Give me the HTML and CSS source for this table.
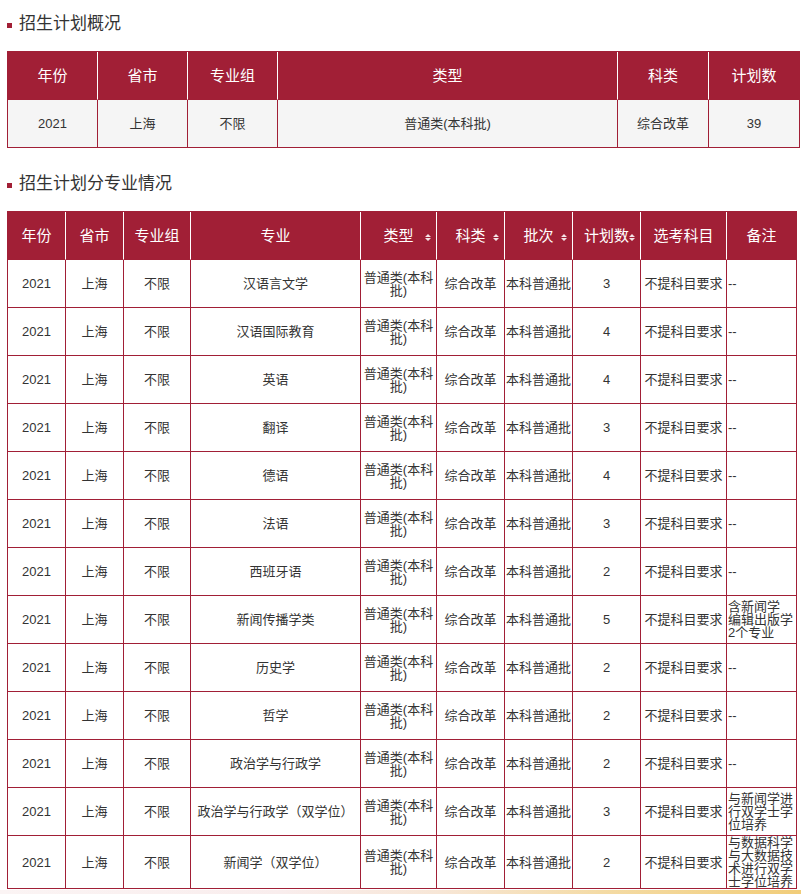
FILE: index.html
```html
<!DOCTYPE html>
<html lang="zh-CN">
<head>
<meta charset="utf-8">
<title>招生计划</title>
<link rel="stylesheet" href="styles.css">
</head>
<body>
<div class="page">
  <h2 class="sec-title"><span class="dot"></span>招生计划概况</h2>
  <table class="plan summary">
    <colgroup>
      <col class="s1"><col class="s2"><col class="s3"><col class="s4"><col class="s5"><col class="s6">
    </colgroup>
    <thead>
      <tr><th>年份</th><th>省市</th><th>专业组</th><th>类型</th><th>科类</th><th>计划数</th></tr>
    </thead>
    <tbody>
      <tr><td>2021</td><td>上海</td><td>不限</td><td>普通类(本科批)</td><td>综合改革</td><td>39</td></tr>
    </tbody>
  </table>

  <h2 class="sec-title second"><span class="dot"></span>招生计划分专业情况</h2>
  <table class="plan detail">
    <colgroup>
      <col class="d1"><col class="d2"><col class="d3"><col class="d4"><col class="d5"><col class="d6"><col class="d7"><col class="d8"><col class="d9"><col class="d10">
    </colgroup>
    <thead>
      <tr>
        <th>年份</th><th>省市</th><th>专业组</th><th>专业</th>
        <th class="sortable">类型<span class="sort"><svg viewBox="0 0 6 7" width="6" height="7"><path d="M0 3 L3 0 L6 3 Z M0 4 L6 4 L3 7 Z" fill="#f4e3e6"/></svg></span></th>
        <th class="sortable">科类<span class="sort"><svg viewBox="0 0 6 7" width="6" height="7"><path d="M0 3 L3 0 L6 3 Z M0 4 L6 4 L3 7 Z" fill="#f4e3e6"/></svg></span></th>
        <th class="sortable">批次<span class="sort"><svg viewBox="0 0 6 7" width="6" height="7"><path d="M0 3 L3 0 L6 3 Z M0 4 L6 4 L3 7 Z" fill="#f4e3e6"/></svg></span></th>
        <th class="sortable">计划数<span class="sort"><svg viewBox="0 0 6 7" width="6" height="7"><path d="M0 3 L3 0 L6 3 Z M0 4 L6 4 L3 7 Z" fill="#f4e3e6"/></svg></span></th>
        <th>选考科目</th><th>备注</th>
      </tr>
    </thead>
    <tbody>
      <tr><td>2021</td><td>上海</td><td>不限</td><td>汉语言文学</td><td>普通类(本科批)</td><td>综合改革</td><td>本科普通批</td><td>3</td><td>不提科目要求</td><td class="note">--</td></tr>
      <tr><td>2021</td><td>上海</td><td>不限</td><td>汉语国际教育</td><td>普通类(本科批)</td><td>综合改革</td><td>本科普通批</td><td>4</td><td>不提科目要求</td><td class="note">--</td></tr>
      <tr><td>2021</td><td>上海</td><td>不限</td><td>英语</td><td>普通类(本科批)</td><td>综合改革</td><td>本科普通批</td><td>4</td><td>不提科目要求</td><td class="note">--</td></tr>
      <tr><td>2021</td><td>上海</td><td>不限</td><td>翻译</td><td>普通类(本科批)</td><td>综合改革</td><td>本科普通批</td><td>3</td><td>不提科目要求</td><td class="note">--</td></tr>
      <tr><td>2021</td><td>上海</td><td>不限</td><td>德语</td><td>普通类(本科批)</td><td>综合改革</td><td>本科普通批</td><td>4</td><td>不提科目要求</td><td class="note">--</td></tr>
      <tr><td>2021</td><td>上海</td><td>不限</td><td>法语</td><td>普通类(本科批)</td><td>综合改革</td><td>本科普通批</td><td>3</td><td>不提科目要求</td><td class="note">--</td></tr>
      <tr><td>2021</td><td>上海</td><td>不限</td><td>西班牙语</td><td>普通类(本科批)</td><td>综合改革</td><td>本科普通批</td><td>2</td><td>不提科目要求</td><td class="note">--</td></tr>
      <tr><td>2021</td><td>上海</td><td>不限</td><td>新闻传播学类</td><td>普通类(本科批)</td><td>综合改革</td><td>本科普通批</td><td>5</td><td>不提科目要求</td><td class="note">含新闻学<br>编辑出版学<br>2个专业</td></tr>
      <tr><td>2021</td><td>上海</td><td>不限</td><td>历史学</td><td>普通类(本科批)</td><td>综合改革</td><td>本科普通批</td><td>2</td><td>不提科目要求</td><td class="note">--</td></tr>
      <tr><td>2021</td><td>上海</td><td>不限</td><td>哲学</td><td>普通类(本科批)</td><td>综合改革</td><td>本科普通批</td><td>2</td><td>不提科目要求</td><td class="note">--</td></tr>
      <tr><td>2021</td><td>上海</td><td>不限</td><td>政治学与行政学</td><td>普通类(本科批)</td><td>综合改革</td><td>本科普通批</td><td>2</td><td>不提科目要求</td><td class="note">--</td></tr>
      <tr><td>2021</td><td>上海</td><td>不限</td><td>政治学与行政学（双学位）</td><td>普通类(本科批)</td><td>综合改革</td><td>本科普通批</td><td>3</td><td>不提科目要求</td><td class="note">与新闻学进行双学士学位培养</td></tr>
      <tr class="tall"><td>2021</td><td>上海</td><td>不限</td><td>新闻学（双学位）</td><td>普通类(本科批)</td><td>综合改革</td><td>本科普通批</td><td>2</td><td>不提科目要求</td><td class="note">与数据科学与大数据技术进行双学士学位培养</td></tr>
    </tbody>
  </table>
</div>
<div class="footer-band"></div>
</body>
</html>
```

FILE: styles.css
```css
html, body {
  margin: 0;
  padding: 0;
  background: #fff;
}

body {
  font-family: "Liberation Sans", "Noto Sans CJK SC", sans-serif;
  color: #333;
}

.page {
  padding: 12px 0 0 7px;
}

.sec-title {
  display: flex;
  align-items: center;
  gap: 7px;
  margin: 0 0 15px 0;
  height: 24px;
  font-size: 17px;
  line-height: 24px;
  font-weight: normal;
  color: #333;
}

.sec-title.second {
  margin-top: 24px;
}

.dot {
  display: block;
  width: 5px;
  height: 5px;
  margin-top: 2px;
  background: #a11f36;
  flex: none;
}

.plan {
  border-collapse: separate;
  border-spacing: 0;
  table-layout: fixed;
  border-left: 1px solid #a11f36;
  border-top: 1px solid #a11f36;
}

.plan th,
.plan td {
  padding: 0;
  text-align: center;
  vertical-align: middle;
  border-right: 1px solid #a11f36;
  border-bottom: 1px solid #a11f36;
  box-sizing: border-box;
}

.plan th {
  height: 48px;
  background: #a11f36;
  color: #fff;
  font-size: 15px;
  font-weight: normal;
  line-height: 18px;
  border-right-color: #fff;
}

.plan th:last-child {
  border-right-color: #a11f36;
}

.plan td {
  height: 48px;
  font-size: 13px;
  line-height: 13px;
  color: #333;
}

.summary {
  width: 793px;
}

.summary td {
  background: #f5f5f5;
  line-height: 16px;
}

.s1, .s2, .s3 { width: 90px; }
.s4 { width: 340px; }
.s5, .s6 { width: 91px; }

.detail {
  width: 790px;
}

.d1, .d2 { width: 58px; }
.d3 { width: 67px; }
.d4 { width: 170px; }
.d5 { width: 76px; }
.d6, .d7, .d8 { width: 68px; }
.d9 { width: 86px; }
.d10 { width: 70px; }

.detail tr.tall td {
  height: 53px;
}

.plan td.note {
  text-align: left;
  padding: 0 1px;
}

.sortable {
  position: relative;
}

.sort {
  position: absolute;
  right: 5px;
  top: 50%;
  margin-top: -2px;
  width: 6px;
  height: 7px;
  line-height: 0;
}

.sort svg {
  display: block;
}

.footer-band {
  height: 20px;
  margin-top: 1px;
  background: linear-gradient(to right, #fbf4f4 0%, #f9eded 35%, #f7e6d6 55%, #f4dba5 75%, #f1cd7a 100%);
}
```
